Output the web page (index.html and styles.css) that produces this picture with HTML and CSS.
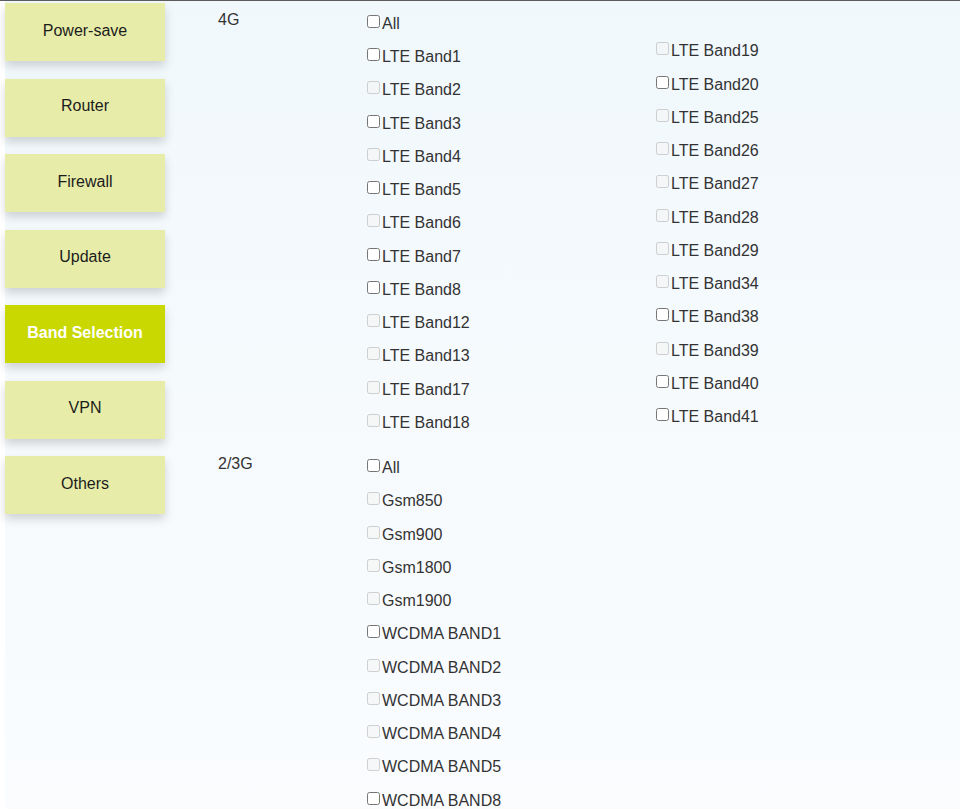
FILE: index.html
```html
<!DOCTYPE html>
<html>
<head>
<meta charset="utf-8">
<title>Band Selection</title>
<link rel="stylesheet" href="styles.css">
</head>
<body>
<div class="page">
  <nav class="sidebar">
    <div class="nav-btn">Power-save</div>
    <div class="nav-btn">Router</div>
    <div class="nav-btn">Firewall</div>
    <div class="nav-btn">Update</div>
    <div class="nav-btn active">Band Selection</div>
    <div class="nav-btn">VPN</div>
    <div class="nav-btn">Others</div>
  </nav>
  <main class="content">
    <section class="band-group">
      <div class="group-label">4G</div>
      <div class="band-col">
        <label class="row"><input type="checkbox">All</label>
        <label class="row"><input type="checkbox">LTE Band1</label>
        <label class="row"><input type="checkbox" disabled>LTE Band2</label>
        <label class="row"><input type="checkbox">LTE Band3</label>
        <label class="row"><input type="checkbox" disabled>LTE Band4</label>
        <label class="row"><input type="checkbox">LTE Band5</label>
        <label class="row"><input type="checkbox" disabled>LTE Band6</label>
        <label class="row"><input type="checkbox">LTE Band7</label>
        <label class="row"><input type="checkbox">LTE Band8</label>
        <label class="row"><input type="checkbox" disabled>LTE Band12</label>
        <label class="row"><input type="checkbox" disabled>LTE Band13</label>
        <label class="row"><input type="checkbox" disabled>LTE Band17</label>
        <label class="row"><input type="checkbox" disabled>LTE Band18</label>
      </div>
      <div class="band-col second">
        <label class="row"><input type="checkbox" disabled>LTE Band19</label>
        <label class="row"><input type="checkbox">LTE Band20</label>
        <label class="row"><input type="checkbox" disabled>LTE Band25</label>
        <label class="row"><input type="checkbox" disabled>LTE Band26</label>
        <label class="row"><input type="checkbox" disabled>LTE Band27</label>
        <label class="row"><input type="checkbox" disabled>LTE Band28</label>
        <label class="row"><input type="checkbox" disabled>LTE Band29</label>
        <label class="row"><input type="checkbox" disabled>LTE Band34</label>
        <label class="row"><input type="checkbox">LTE Band38</label>
        <label class="row"><input type="checkbox" disabled>LTE Band39</label>
        <label class="row"><input type="checkbox">LTE Band40</label>
        <label class="row"><input type="checkbox">LTE Band41</label>
      </div>
    </section>
    <section class="band-group">
      <div class="group-label">2/3G</div>
      <div class="band-col">
        <label class="row"><input type="checkbox">All</label>
        <label class="row"><input type="checkbox" disabled>Gsm850</label>
        <label class="row"><input type="checkbox" disabled>Gsm900</label>
        <label class="row"><input type="checkbox" disabled>Gsm1800</label>
        <label class="row"><input type="checkbox" disabled>Gsm1900</label>
        <label class="row"><input type="checkbox">WCDMA BAND1</label>
        <label class="row"><input type="checkbox" disabled>WCDMA BAND2</label>
        <label class="row"><input type="checkbox" disabled>WCDMA BAND3</label>
        <label class="row"><input type="checkbox" disabled>WCDMA BAND4</label>
        <label class="row"><input type="checkbox" disabled>WCDMA BAND5</label>
        <label class="row"><input type="checkbox">WCDMA BAND8</label>
      </div>
    </section>
  </main>
</div>
</body>
</html>
```
FILE: styles.css
```css
html, body {
  margin: 0;
  padding: 0;
  height: 100%;
  overflow: hidden;
}
body {
  background: #ffffff;
  border-top: 1px solid #5c5c5c;
  font-family: "Liberation Sans", Arial, sans-serif;
  font-size: 16px;
  color: #333333;
}
.page {
  display: flex;
  margin-left: 5px;
  min-height: 100%;
  padding-top: 1px;
  background: linear-gradient(to bottom, #f0f8fc 0%, #f6fafd 50%, #fafcfe 100%);
}
.sidebar {
  width: 160px;
  flex: none;
  display: flex;
  flex-direction: column;
  gap: 17.5px;
  padding-top: 1px;
}
.nav-btn {
  height: 58px;
  display: flex;
  align-items: center;
  justify-content: center;
  padding-bottom: 3px;
  box-sizing: border-box;
  background: #e7eda9;
  color: #1c1c1c;
  box-shadow: 0 5px 9px rgba(0, 0, 0, 0.16);
}
.nav-btn.active {
  background: #c8d800;
  color: #ffffff;
  font-weight: bold;
  font-size: 16px;
}
.content {
  flex: 1;
  padding-left: 53px;
  padding-top: 4.8px;
}
.band-group {
  display: grid;
  grid-template-columns: 149px 289px auto;
  align-items: start;
  margin-bottom: 12px;
}
.group-label {
  line-height: 33.25px;
  margin-top: -4px;
  color: #333333;
}
.band-col {
  display: flex;
  flex-direction: column;
}
.band-col.second {
  margin-top: 27.5px;
}
.row {
  display: block;
  height: 33.25px;
  line-height: 33.25px;
  white-space: nowrap;
}
.row input {
  width: 13px;
  height: 13px;
  margin: 0 2px 0 0;
  vertical-align: 1px;
}
```
